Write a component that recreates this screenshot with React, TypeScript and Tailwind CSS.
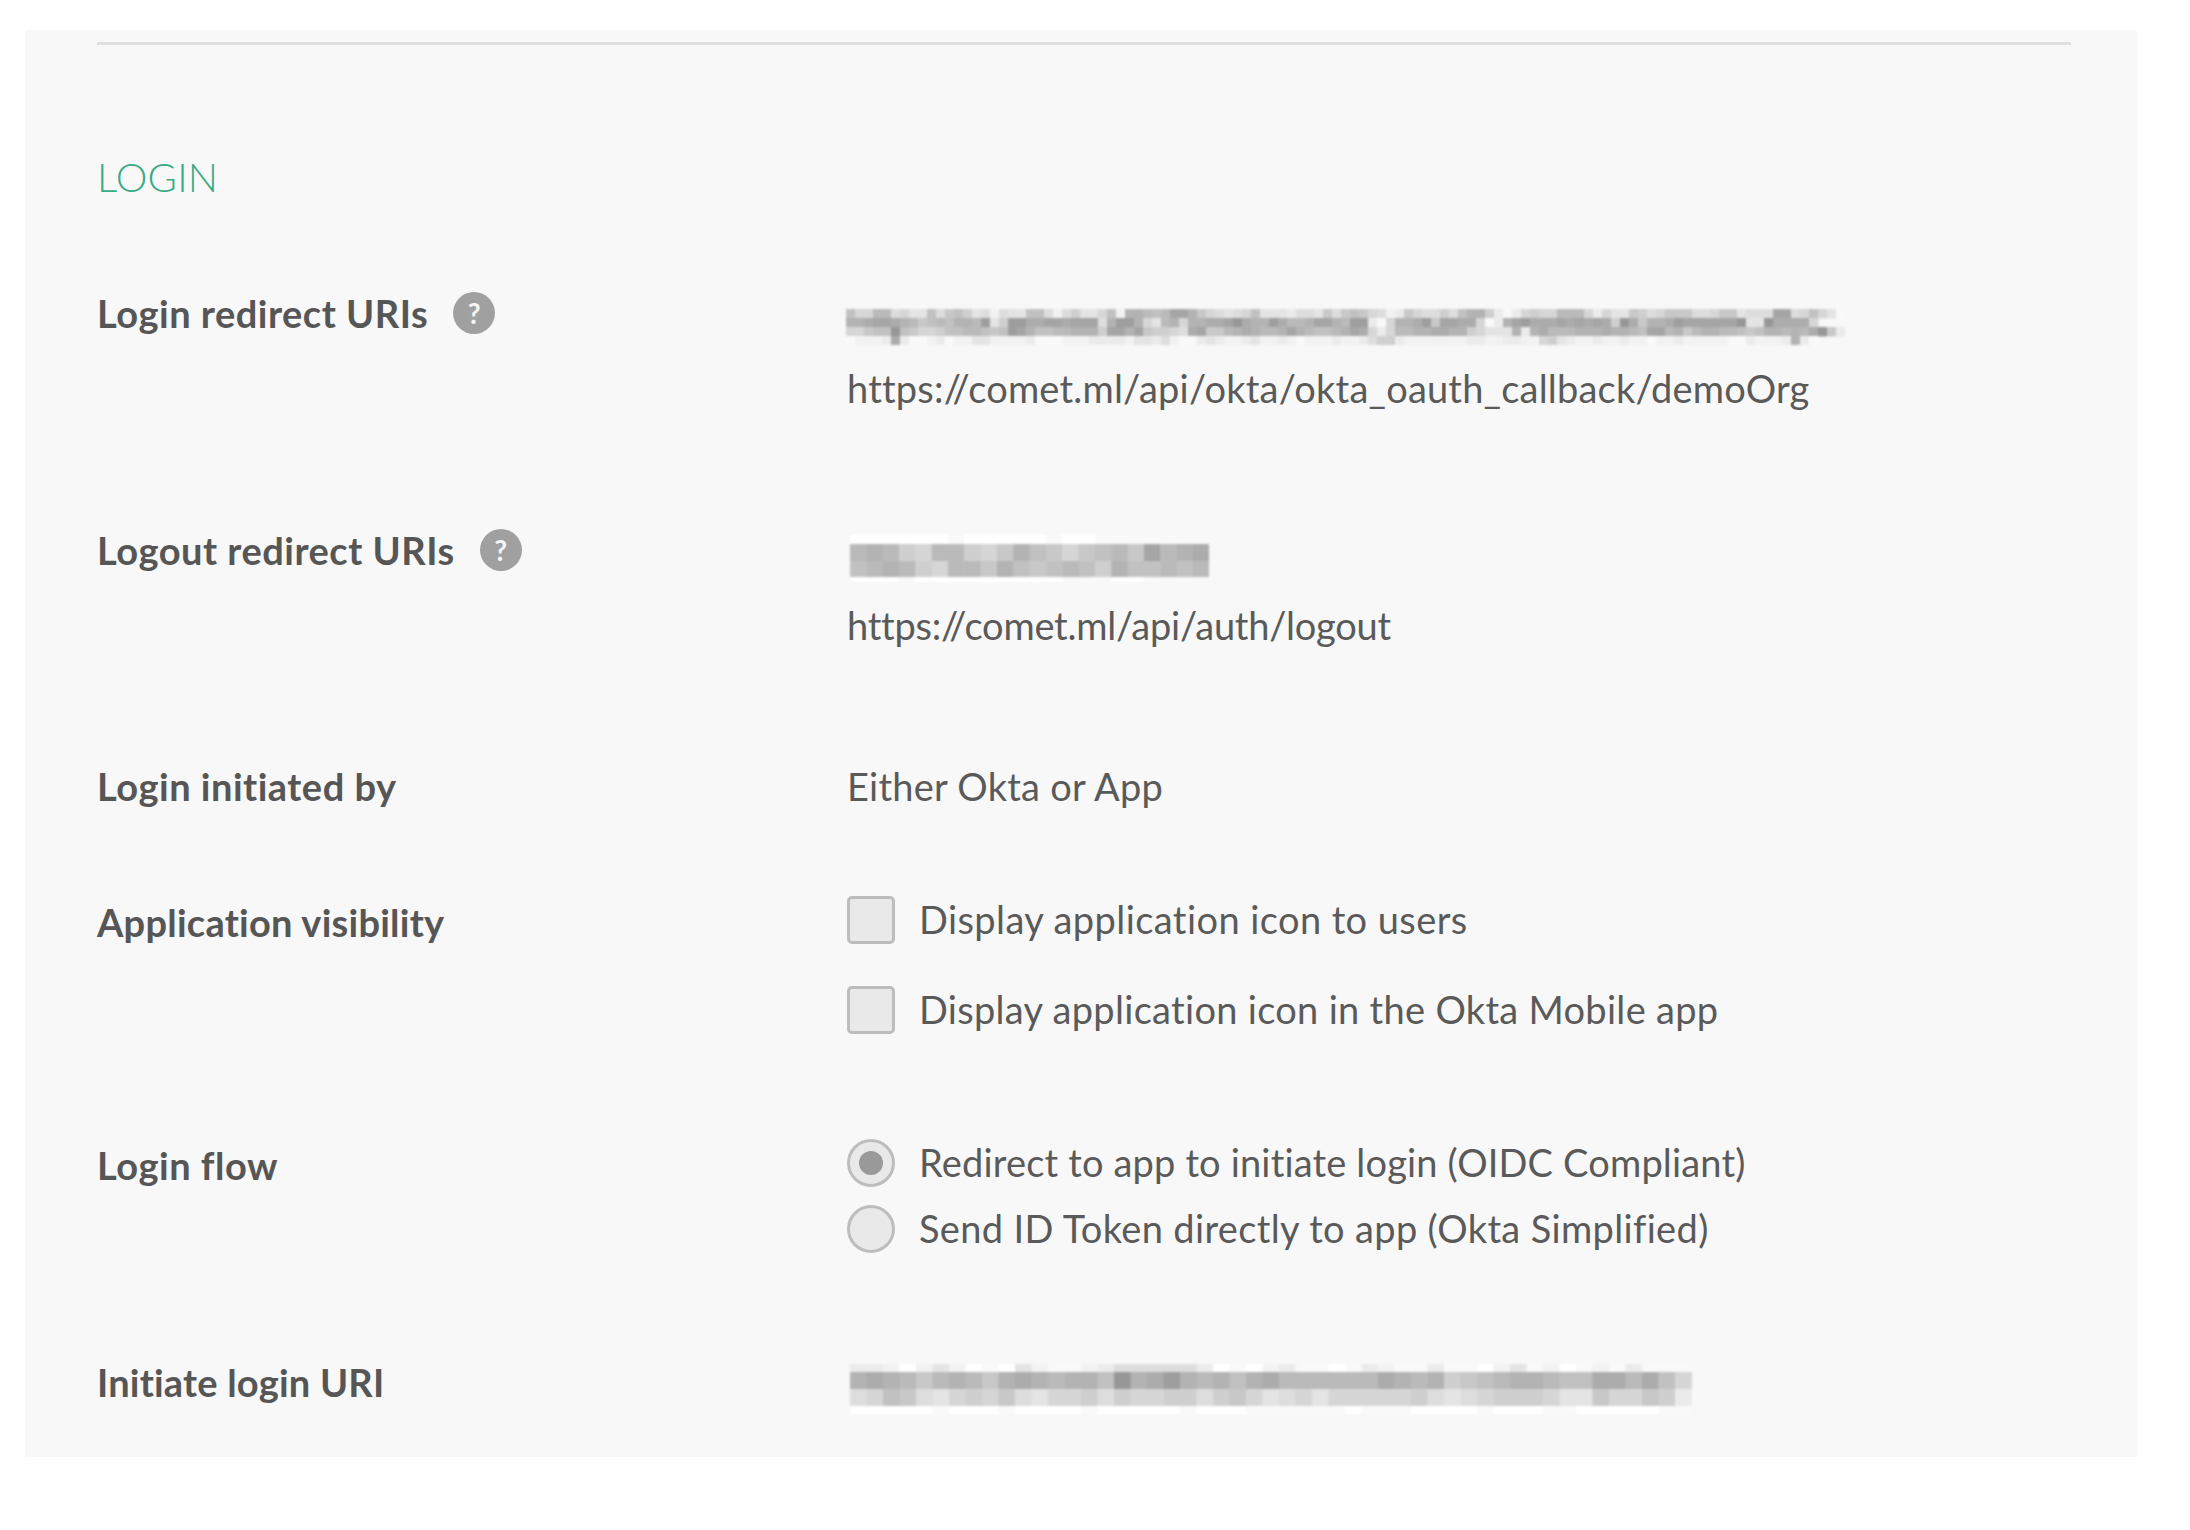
import React from "react";

// grey level per cell: 0 is darkest, f is about the panel colour, g is white
const shade = (c: string) => {
  const n = parseInt(c, 17);
  if (n === 16) return "#ffffff";
  const v = 0x90 + n * 7;
  return `rgb(${v},${v},${v})`;
};

type MosaicProps = { rows: string[]; heights: number[]; cell: number; className?: string };

function Mosaic({ rows, heights, cell, className }: MosaicProps) {
  const width = Math.max(...rows.map((r) => r.length)) * cell;
  const height = heights.reduce((a, b) => a + b, 0);
  let y = 0;
  return (
    <svg width={width} height={height} className={`block ${className ?? ""}`}>
      {rows.map((row, i) => {
        const top = y;
        y += heights[i];
        return row.split("").map((c, j) => (
          <rect key={`${i}-${j}`} x={j * cell} y={top} width={cell + 0.5} height={heights[i] + 0.5} fill={shade(c)} />
        ));
      })}
    </svg>
  );
}

const loginRows = [
  "7aa66bacc7b8 79cbebcc77beb9cca7e55676335 8abcba7cccdbbc8b8".replace(/ /g, "") + "78abed8abb9b7559dfda9aa666adacc89ba888bba88cbbb33ba7acf",
  "5543345687675562c92244334333b522 5ac65a55443145524 6653 35".replace(/ /g, "") + "622dfa55428334 4af d53 24443434 3 491 4855423333331cc14444a".replace(/ /g, ""),
  "aa87717 8aa9776678 723 577665 5593 353 899ab43 886545 66 5 3 56 776".replace(/ /g, "") + "534ada665 544 559accc5d 5466655545 567 33658 655 6678755 65 6418d".replace(/ /g, ""),
  "feeed4dffed feecceeeed fffeeeddddecc dbeffdcdeedceedefeeed".replace(/ /g, "") + "eedb99deee eeeeddee ddeea9cdeedeedeefeedeeeeeffdeeed5df".replace(/ /g, ""),
];

const logoutRows = [
  "ggggggfgggggfggfffffff",
  "6569a669a8578a876" + "83654",
  "7656" + "9a6685787679" + "577676",
  "gggfgggggggggfffggffff",
];

const initiateRows = [
  "ddegecegfgceffedbbbbbdgfgedffgfdeffdffgecfegfefdfff",
  "5456865685" + "4565571542" + "5657546666" + "6645659876" + "5567744647" + "a",
  "ba78bca9a8" + "bcaa9b9aa9" + "9b98acbaca" + "aaaa9bcba9" + "99acc8aa89" + "d",
  "gggggfgggfggggfgggggfgggffffffgfffggggfgggffgggggff",
];

function Help() {
  return (
    <span className="ml-[25px] flex h-[42px] w-[42px] shrink-0 items-center justify-center rounded-full bg-[#a0a0a0] text-[28px] font-bold tracking-normal text-[#f4f4f4]">
      ?
    </span>
  );
}

function Label({ children, help, className }: { children: React.ReactNode; help?: boolean; className?: string }) {
  return (
    <div className={`flex h-[48px] items-center text-[38px] font-bold text-[#565656] ${className ?? ""}`}>
      {children}
      {help && <Help />}
    </div>
  );
}

function Check({ children, className }: { children: React.ReactNode; className?: string }) {
  return (
    <div className={`flex h-[48px] items-center gap-[24px] ${className ?? ""}`}>
      <span className="h-[48px] w-[48px] rounded-[5px] border-[3px] border-[#bdbdbd] bg-[#e9e9e9]" />
      <span className="-mt-[2px]">{children}</span>
    </div>
  );
}

function Radio({ on, children, className }: { on?: boolean; children: React.ReactNode; className?: string }) {
  return (
    <div className={`flex h-[48px] items-center gap-[24px] ${className ?? ""}`}>
      <span className="flex h-[48px] w-[48px] items-center justify-center rounded-full border-[3px] border-[#bdbdbd] bg-[#e9e9e9]">
        {on && <span className="h-[24px] w-[24px] rounded-full bg-[#999999]" />}
      </span>
      <span className="-mt-[2px]">{children}</span>
    </div>
  );
}

export default function App() {
  return (
    <div className="min-h-[1530px] bg-white pt-[30px] pl-[25px] font-['Lato',sans-serif]">
      <div className="h-[1427px] w-[2112px] bg-[#f8f8f8] pt-[12px] pr-[66px] pl-[72px] text-[38px] tracking-[0.25px] text-[#5a5a5a]">
        <div className="h-[3px] bg-[#e0e0e0]" />
        <h2 className="mt-[108px] text-[40px] leading-[48px] font-light tracking-[0.2px] text-[#38aa85]">LOGIN</h2>

        <div className="mt-[88px] grid grid-cols-[750px_1fr]">
          <Label help className="tracking-[0.5px]">Login redirect URIs</Label>
          <div className="pt-[20px]">
            <Mosaic rows={loginRows} heights={[9, 9, 9, 9]} cell={9} className="-ml-[1px] blur-[1px]" />
            <div className="mt-[19px] h-[48px] leading-[48px] tracking-[0.2px]">https://comet.ml/api/okta/okta_oauth_callback/demoOrg</div>
          </div>
        </div>

        <div className="mt-[115px] grid grid-cols-[750px_1fr]">
          <Label help className="-mt-[1px] tracking-[0.5px]">Logout redirect URIs</Label>
          <div className="pt-[7px]">
            <Mosaic rows={logoutRows} heights={[10, 17, 16, 5]} cell={16.33} className="ml-[3px] blur-[1px]" />
            <div className="mt-[19px] h-[48px] leading-[48px] tracking-[-0.25px]">https://comet.ml/api/auth/logout</div>
          </div>
        </div>

        <div className="mt-[114px] grid grid-cols-[750px_1fr]">
          <Label className="-mt-[1px] tracking-[0.5px]">Login initiated by</Label>
          <div className="-mt-[1px] h-[48px] leading-[48px]">Either Okta or App</div>
        </div>

        <div className="mt-[86px] grid grid-cols-[750px_1fr]">
          <Label className="mt-[2px] tracking-[0.25px]">Application visibility</Label>
          <div>
            <Check className="tracking-[0.42px]">Display application icon to users</Check>
            <Check className="mt-[42px] tracking-[0.3px]">Display application icon in the Okta Mobile app</Check>
          </div>
        </div>

        <div className="mt-[105px] grid grid-cols-[750px_1fr]">
          <Label className="mt-[2px] tracking-[0.5px]">Login flow</Label>
          <div>
            <Radio on className="tracking-[0.17px]">Redirect to app to initiate login (OIDC Compliant)</Radio>
            <Radio className="mt-[18px] tracking-[0.35px]">Send ID Token directly to app (Okta Simplified)</Radio>
          </div>
        </div>

        <div className="mt-[105px] grid grid-cols-[750px_1fr]">
          <Label className="tracking-[0.2px]">Initiate login URI</Label>
          <div className="pt-[6px]">
            <Mosaic rows={initiateRows} heights={[8, 17, 17, 8]} cell={16.5} className="ml-[3px] blur-[1px]" />
          </div>
        </div>
      </div>
    </div>
  );
}
